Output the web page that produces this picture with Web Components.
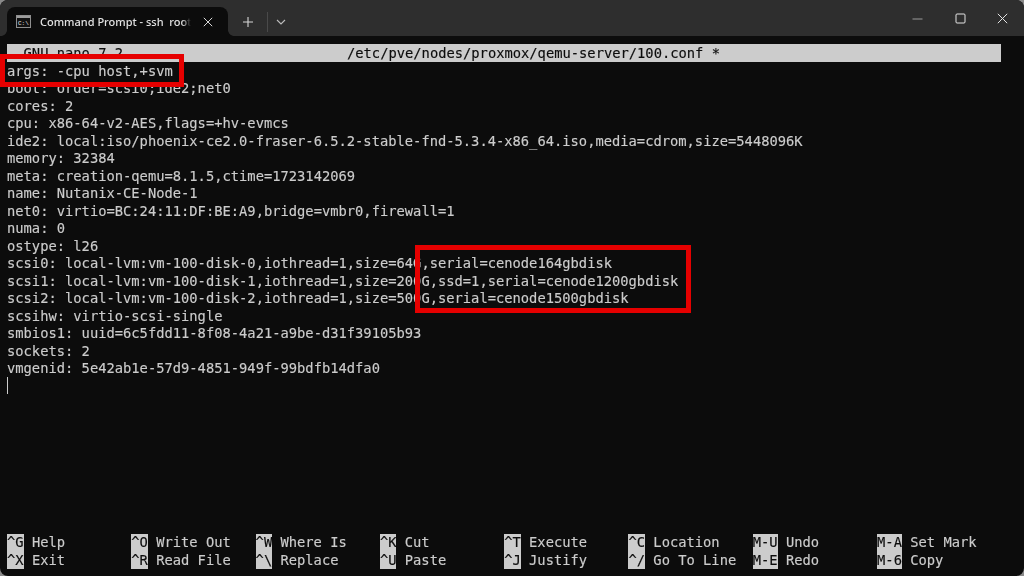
<!DOCTYPE html>
<html lang="en">
<head>
<meta charset="utf-8">
<title>Command Prompt - ssh root</title>
<style>
html,body{margin:0;padding:0;width:1024px;height:576px;overflow:hidden;background:#8a8a8a}
</style>
</head>
<body>
<term-window>
  <term-tab slot="tab" title-text="Command Prompt - ssh  root"></term-tab>
  <nano-screen>
    <nano-title slot="title" name="  GNU nano 7.2" file="/etc/pve/nodes/proxmox/qemu-server/100.conf *"></nano-title>
    <nano-line>args: -cpu host,+svm</nano-line>
    <nano-line>boot: order=scsi0;ide2;net0</nano-line>
    <nano-line>cores: 2</nano-line>
    <nano-line>cpu: x86-64-v2-AES,flags=+hv-evmcs</nano-line>
    <nano-line>ide2: local:iso/phoenix-ce2.0-fraser-6.5.2-stable-fnd-5.3.4-x86_64.iso,media=cdrom,size=5448096K</nano-line>
    <nano-line>memory: 32384</nano-line>
    <nano-line>meta: creation-qemu=8.1.5,ctime=1723142069</nano-line>
    <nano-line>name: Nutanix-CE-Node-1</nano-line>
    <nano-line>net0: virtio=BC:24:11:DF:BE:A9,bridge=vmbr0,firewall=1</nano-line>
    <nano-line>numa: 0</nano-line>
    <nano-line>ostype: l26</nano-line>
    <nano-line>scsi0: local-lvm:vm-100-disk-0,iothread=1,size=64G,serial=cenode164gbdisk</nano-line>
    <nano-line>scsi1: local-lvm:vm-100-disk-1,iothread=1,size=200G,ssd=1,serial=cenode1200gbdisk</nano-line>
    <nano-line>scsi2: local-lvm:vm-100-disk-2,iothread=1,size=500G,serial=cenode1500gbdisk</nano-line>
    <nano-line>scsihw: virtio-scsi-single</nano-line>
    <nano-line>smbios1: uuid=6c5fdd11-8f08-4a21-a9be-d31f39105b93</nano-line>
    <nano-line>sockets: 2</nano-line>
    <nano-line>vmgenid: 5e42ab1e-57d9-4851-949f-99bdfb14dfa0</nano-line>
    <nano-line cursor></nano-line>
    <nano-shortcuts slot="footer">
      <nano-key k="^G" label="Help"></nano-key><nano-key k="^O" label="Write Out"></nano-key><nano-key k="^W" label="Where Is"></nano-key><nano-key k="^K" label="Cut"></nano-key><nano-key k="^T" label="Execute"></nano-key><nano-key k="^C" label="Location"></nano-key><nano-key k="M-U" label="Undo"></nano-key><nano-key k="M-A" label="Set Mark"></nano-key>
      <nano-key k="^X" label="Exit"></nano-key><nano-key k="^R" label="Read File"></nano-key><nano-key k="^\" label="Replace"></nano-key><nano-key k="^U" label="Paste"></nano-key><nano-key k="^J" label="Justify"></nano-key><nano-key k="^/" label="Go To Line"></nano-key><nano-key k="M-E" label="Redo"></nano-key><nano-key k="M-6" label="Copy"></nano-key>
    </nano-shortcuts>
  </nano-screen>
  <red-box slot="overlay" style="left:0;top:54px;width:184px;height:33px"></red-box>
  <red-box slot="overlay" style="left:415px;top:245px;width:276px;height:68px"></red-box>
</term-window>
<script>
function def(name, html, init){
  customElements.define(name, class extends HTMLElement{
    constructor(){super();const s=this.attachShadow({mode:'open'});s.innerHTML=html;}
    connectedCallback(){ if(init) init(this, this.shadowRoot); }
  });
}
const mono = `font-family:"DejaVu Sans Mono","Liberation Mono",monospace;font-size:13.78px;line-height:17.5px;white-space:pre;color:#cccccc;-webkit-text-stroke:.15px currentColor;`;

def('term-window', `<style>
:host{display:flex;flex-direction:column;position:relative;width:1024px;height:576px;background:#0c0c0c;border-radius:8px;overflow:hidden}
.bar{display:flex;align-items:flex-end;height:36px;background:#2e2e2e;padding-left:7px;flex:none}
.new{display:flex;align-items:center;height:29px;color:#d6d6d6}
.plus{width:39px;display:flex;justify-content:center}
.sep{width:1px;height:20px;background:#4a4a4a}
.chev{width:26px;display:flex;justify-content:center}
.sp{flex:1}
.ctl{display:flex;height:36px;align-items:center;color:#e4e4e4}
.ctl div{width:42.5px;display:flex;justify-content:center;align-items:center}
.body{flex:1;display:flex;min-height:0;padding:8px 23px 7px 7px;filter:blur(.3px)}
</style>
<div class="bar">
  <slot name="tab"></slot>
  <div class="new">
    <div class="plus"><svg width="12" height="12" viewBox="0 0 12 12"><path d="M6 1v10M1 6h10" stroke="currentColor" stroke-width="1.1" fill="none"/></svg></div>
    <div class="sep"></div>
    <div class="chev"><svg width="10" height="6" viewBox="0 0 10 6"><path d="M1 1l4 4 4-4" stroke="#bdbdbd" stroke-width="1.1" fill="none"/></svg></div>
  </div>
  <div class="sp"></div>
  <div class="ctl">
    <div><svg width="11" height="11" viewBox="0 0 11 11"><path d="M.5 6h10" stroke="#9a9a9a" stroke-width="1.2"/></svg></div>
    <div><svg width="11" height="11" viewBox="0 0 11 11"><rect x="1" y="1" width="9" height="9" rx="1" stroke="currentColor" stroke-width="1" fill="none"/></svg></div>
    <div><svg width="11" height="11" viewBox="0 0 11 11"><path d="M.8.8l9.4 9.4M10.2.8L.8 10.2" stroke="currentColor" stroke-width="1" fill="none"/></svg></div>
  </div>
</div>
<div class="body"><slot></slot></div>
<slot name="overlay"></slot>`);

def('term-tab', `<style>
:host{display:flex;align-items:center;position:relative;box-sizing:border-box;width:221px;height:29px;background:#0c0c0c;border-radius:8px 8px 0 0;padding-left:9px;color:#e2e2e2;font:500 11px "Noto Sans","Open Sans",sans-serif}
:host::before,:host::after{content:"";position:absolute;bottom:0;width:6px;height:6px}
:host::before{left:-6px;background:radial-gradient(circle at 0 0,#2e2e2e 5.5px,#0c0c0c 6.2px)}
:host::after{right:-6px;background:radial-gradient(circle at 100% 0,#2e2e2e 5.5px,#0c0c0c 6.2px)}
svg{flex:none}
.t{width:151px;margin-left:9px;white-space:pre;-webkit-mask-image:linear-gradient(90deg,#000 94%,transparent);mask-image:linear-gradient(90deg,#000 94%,transparent)}
.x{margin-left:12px;display:flex}
</style>
<svg width="15" height="13" viewBox="0 0 15 13"><rect x=".5" y=".5" width="14" height="12" fill="#111" stroke="#8f8f8f"/><rect x="1" y="1" width="13" height="2" fill="#9c9c9c"/><text x="2" y="9.8" font-family="Liberation Mono,monospace" font-size="6" fill="#e8e8e8">C:\\</text></svg>
<span class="t"></span>
<span class="x"><svg width="10" height="10" viewBox="0 0 10 10"><path d="M.8.8l8.4 8.4M9.2.8L.8 9.2" stroke="#d8d8d8" stroke-width="1" fill="none"/></svg></span>`,
(el,s)=>{s.querySelector('.t').textContent=el.getAttribute('title-text');});

def('nano-screen', `<style>
:host{display:flex;flex-direction:column;flex:1;min-width:0}
.buf{flex:1;min-height:0}
</style>
<slot name="title"></slot>
<div class="buf"><slot></slot></div>
<slot name="footer"></slot>`);

def('nano-title', `<style>
:host{display:grid;grid-template-columns:340px 1fr;height:17.5px;background:#cccccc;${mono}color:#0c0c0c;line-height:19.5px}
span{height:17.5px}
</style><span class="a"></span><span class="b"></span>`,
(el,s)=>{s.querySelector('.a').textContent=el.getAttribute('name');s.querySelector('.b').textContent=el.getAttribute('file');});

def('nano-line', `<style>
:host{display:block;height:17.5px;${mono}line-height:19.5px}
:host([cursor]) i{display:block;width:1px;height:17.5px;background:#cccccc}
</style><i></i><slot></slot>`);

def('nano-shortcuts', `<style>
:host{display:grid;grid-template-columns:repeat(8,124.3px);grid-auto-rows:17.5px;flex:none}
</style><slot></slot>`);

def('nano-key', `<style>
:host{display:flex;gap:8.3px;${mono}}
b{font-weight:normal;background:#cccccc;color:#0c0c0c;display:block}
</style><b></b><span></span>`,
(el,s)=>{s.querySelector('b').textContent=el.getAttribute('k');s.querySelector('span').textContent=el.getAttribute('label');});

def('red-box', `<style>
:host{display:block;position:absolute;box-sizing:border-box;border:5px solid #e60000}
</style>`);
</script>
</body>
</html>
